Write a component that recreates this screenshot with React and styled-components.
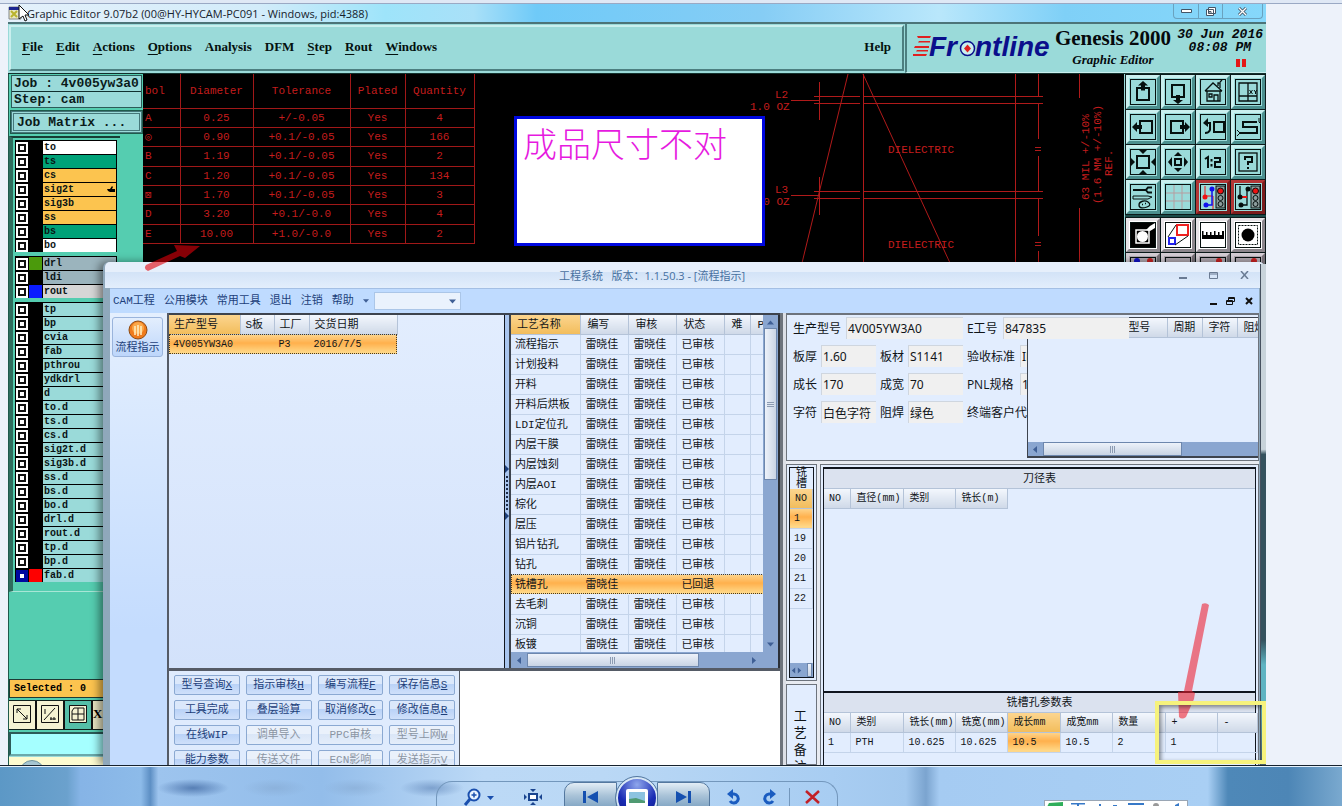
import React from "react";
import styled, { createGlobalStyle, css } from "styled-components";

const SONG = `"Liberation Mono", "Noto Sans CJK SC", monospace`;
const UI = `"Open Sans", "Noto Sans CJK SC", sans-serif`;
const MONO = `"Liberation Mono", monospace`;

const GlobalStyle = createGlobalStyle`
  * {
    box-sizing: border-box;
  }

  body {
    margin: 0;
    overflow: hidden;
  }

  button,
  input,
  select {
    font: inherit;
    color: inherit;
    margin: 0;
    padding: 0;
    border: none;
    background: none;
    border-radius: 0;
  }

  table {
    border-collapse: collapse;
    border-spacing: 0;
  }
`;

// === Viewer ===
const Viewer = styled.div`
  display: flex;
  flex-direction: column;
  height: 100vh;
  background: #edf2fa;
  border-top: 3px solid #dfe8f5;
`;

const Photo = styled.main`
  position: relative;
  flex: 1;
  min-height: 0;
  display: flex;
  flex-direction: column;
  margin: 0 76px 0 8px;
  overflow: hidden;
  background: #55cdb0;
`;

const TopLine = styled.div`
  height: 1px;
  background: #9aa9c4;
`;

// === CAM window ===
const CamTitle = styled.header`
  display: flex;
  align-items: center;
  height: 20px;
  flex: none;
  border-bottom: 2px solid #4c7478;
  background: linear-gradient(
    90deg,
    #e4f1fb 0,
    #d3ecfa 20%,
    #9ee4fa 30%,
    #a9e0f8 37%,
    #6fcaf8 42%,
    #86cdf5 60%,
    #b9e7fb 74%,
    #7fd0f7 84%,
    #86d8fb 100%
  );
  font: 11px ${UI};
  color: #16222c;

  > svg {
    overflow: visible;
  }
`;

const CamTitleText = styled.h1`
  flex: 1;
  margin: 0 0 0 3px;
  font: inherit;
`;

const CaptionButtons = styled.div`
  display: flex;
  align-self: flex-start;
  height: 15px;
  margin-right: 3px;
  border: 1px solid #6aa2bf;
  border-top: none;
  border-radius: 0 0 4px 4px;
`;

const CaptionButton = styled.button`
  display: flex;
  align-items: center;
  justify-content: center;
  width: ${({ $wide }) => ($wide ? "40px" : "24px")};

  & + & {
    border-left: 1px solid #6aa2bf;
  }
`;

const CamHeader = styled.div`
  display: flex;
  flex: none;
  height: 49px;
  background: #9adad9;
`;

const CamMenu = styled.nav`
  flex: 1;
  display: flex;
  align-items: center;
  gap: 13px;
  margin: 1px 1px 2px 1px;
  padding: 0 11px 2px 11px;
  border: 2px solid;
  border-color: #c9efee #4c7f80 #4c7f80 #c9efee;
  font: bold 13px "Liberation Serif", serif;
  color: #04110f;

  u {
    text-underline-offset: 3px;
  }
`;

const CamMenuItem = styled.button`
  &:last-child {
    margin-left: auto;
  }
`;

const Brand = styled.div`
  display: flex;
  width: 361px;
  padding: 1px 3px 0 6px;
  border-left: 2px solid #4c7f80;
  border-bottom: 1px solid #c9efee;
  color: #05090c;
`;

const BrandName = styled.div`
  width: 124px;
  text-align: center;
  font: bold 21px/26px "Liberation Serif", serif;
  white-space: nowrap;

  small {
    display: block;
    font: italic bold 13px/18px "Liberation Serif", serif;
  }
`;

const Clock = styled.div`
  flex: 1;
  text-align: right;
  font: italic bold 13px/13px ${MONO};
  padding-top: 3px;
  white-space: nowrap;

  span {
    display: block;
    margin-right: 12px;
  }
`;

const Pause = styled.i`
  display: block;
  width: 10px;
  height: 8px;
  margin: 5px 17px 0 auto;
  border: solid #e31717;
  border-width: 0 4px;
`;

const CamBody = styled.div`
  flex: 1;
  min-height: 0;
  display: flex;
  border-top: 1px solid #12302c;
`;

const CamSide = styled.aside`
  width: 135px;
  flex: none;
  display: flex;
  flex-direction: column;
  border-left: 1px solid #1f5a4c;
  background: #55cdb0;
`;

const JobBox = styled.div`
  margin: 1px 1px 3px 2px;
  border: 1px solid #2c5b58;
  background: #9adad9;
  font: bold 13px/15px ${MONO};
  color: #0a1a1a;
  white-space: nowrap;

  div {
    padding-left: 2px;
  }

  div + div {
    border-top: 1px solid #10302f;
  }
`;

const JobMatrixButton = styled.button`
  height: 22px;
  flex: none;
  margin: 0 1px 3px 2px;
  padding-left: 3px;
  border: 3px double #45777a;
  background: #9adad9;
  outline: 1px solid #1f5a4c;
  text-align: left;
  font: bold 13px/15px ${MONO};
  color: #0a1a1a;
`;

const LayerPanel = styled.div`
  width: 111px;
  padding: 2px 3px 9px 2px;
  border-left: 4px solid #2f6d5e;
  border-top: 2px solid #173d35;
  border-bottom: 1px solid #a8e6d6;
  background: #55cdb0;
`;

const LayerGroup = styled.div`
  background: #000;
  margin-bottom: 4px;
  padding: 0 1px;

  &:last-child {
    margin-bottom: 0;
  }
`;

const LayerRow = styled.label`
  display: flex;
  align-items: center;
  height: 14px;
  padding-top: 1px;
  font: bold 10px/13px ${MONO};
  color: #0b1414;
`;

const LayerCheck = styled.input`
  appearance: none;
  width: 12px;
  height: 12px;
  flex: none;
  border: 2px solid ${({ $active }) => ($active ? "#0008a0" : "#fff")};
  outline: 2px solid ${({ $active }) => ($active ? "#0008a0" : "#111")};
  outline-offset: -4px;
  background: #fff;
`;

const LayerColor = styled.span`
  width: 13px;
  height: 13px;
  margin: 0 1px;
  flex: none;
  background: ${({ $color }) => $color || "#000"};
`;

const LayerName = styled.span`
  flex: 1;
  height: 13px;
  padding: 0 1px;
  display: flex;
  justify-content: space-between;
  align-items: center;
  background: ${({ $bg }) => $bg};
`;

const CamFooter = styled.div`
  margin-top: auto;
  flex: none;
`;

const SelectedBar = styled.div`
  height: 19px;
  padding-left: 4px;
  border: 1px solid #1f3b35;
  background: #fcc44f;
  font: bold 10px/17px ${MONO};
`;

const ModeBar = styled.div`
  display: flex;
  margin-top: 2px;
  height: 30px;
  border: solid #10201c;
  border-width: 1px 0;
  background: #e9e6c4;
  font: bold 13px/26px "Liberation Serif", serif;
`;

const ModeButton = styled.button`
  width: 28px;
  height: 28px;
  padding: 3px;
  border-right: 2px solid #111;
  background: ${({ $on }) => ($on ? "#55bfa8" : "#f5f2d2")};
`;

const CommandInput = styled.input`
  display: block;
  width: 100%;
  height: 24px;
  margin-top: 2px;
  border: 2px solid;
  border-color: #2c5b58 #bdeeee #6aa9ab #2c5b58;
  background: #a5ffff;
`;

const FooterStrip = styled.div`
  height: 9px;
  overflow: hidden;
  background: #fdfbd0;
  border-top: 1px solid #9adad9;
  padding-left: 10px;

  i {
    display: block;
    width: 26px;
    height: 20px;
    margin-top: 3px;
    border: 1px solid #6f95a0;
    border-radius: 13px 13px 0 0;
    background: #a6c6d2;
  }
`;

const Canvas = styled.section`
  position: relative;
  flex: 1;
  min-width: 0;
  display: flex;
  justify-content: space-between;
  background: #000;
`;

const DrillTable = styled.table`
  width: 331px;
  height: 170px;
  table-layout: fixed;
  font: 11px/12px ${MONO};
  color: #c41d1d;

  th {
    height: 34px;
    padding-bottom: 4px;
    font-weight: normal;
  }

  th,
  td {
    padding: 0;
    text-align: center;
    border: 1px solid #a01818;
    border-top: none;
  }

  th:first-child,
  td:first-child {
    text-align: left;
    border-left: none;
    padding-left: 2px;
  }
`;

const StackUp = styled.svg`
  flex: none;
  width: 383px;
  height: 189px;
  font: 11px ${MONO};
  fill: #c41d1d;
`;

const Note = styled.div`
  position: absolute;
  left: 371px;
  top: 42px;
  width: 251px;
  height: 130px;
  padding: 2px 6px;
  border: 3px solid #0008e0;
  background: #fff;
  font: 300 34px/44px "Noto Sans CJK SC", sans-serif;
  color: #e61ae0;
  white-space: nowrap;
`;

const ToolBox = styled.aside`
  width: 142px;
  flex: none;
  background: #1c4a48;
  border-left: 1px solid #9adad9;
`;

const ToolGrid = styled.div`
  display: grid;
  grid-template-columns: repeat(4, 34px);
  gap: 1px;
  padding: 1px;
  margin-bottom: 2px;
  background: #0c1a1a;
`;

const TONES = {
  teal: ["#9adad9", "#c9efee", "#4c8f8e"],
  red: ["#9adad9", "#b33636", "#7c1c1c"],
  white: ["#fff", "#e8e4e8", "#8c868c"],
  grey: ["#b3abb3", "#d5ced5", "#777077"],
};

const ToolButton = styled.button`
  width: 34px;
  height: 34px;
  border: 3px solid;
  border-color: ${({ $tone }) => {
    const [, light, dark] = TONES[$tone];
    return `${light} ${dark} ${dark} ${light}`;
  }};
  background: ${({ $tone }) => TONES[$tone][0]};

  svg {
    display: block;
    width: 28px;
    height: 28px;
  }
`;

// === Engineering window ===
const AppWindow = styled.section`
  position: absolute;
  left: 95px;
  right: 1px;
  top: 258px;
  bottom: 0;
  display: flex;
  flex-direction: column;
  border: solid #8fa8bb;
  border-width: 0 6px 0 7px;
  border-radius: 6px 6px 0 0;
  background: #e2edfe;
  box-shadow: -4px 0 8px rgb(0 0 0 / 45%);
  font: 11px/12px ${SONG};
  color: #101418;
`;

const AppTitle = styled.header`
  display: flex;
  align-items: center;
  flex: none;
  height: 26px;
  margin: 0 -5px;
  padding: 0 4px 0 32px;
  border-radius: 5px 5px 0 0;
  background: linear-gradient(#e6effb 0 40%, #d3e3f7 40%, #e3eefc);
  color: #47709f;
`;

const AppTitleText = styled.h2`
  flex: 1;
  margin: 0;
  text-align: center;
  font: 11px ${UI};
  white-space: pre;
`;

const PlainButton = styled.button`
  display: flex;
  align-items: center;
  justify-content: center;
  width: ${({ $w }) => $w || 31}px;
  height: 16px;
`;

const AppMenu = styled.nav`
  display: flex;
  align-items: center;
  flex: none;
  gap: 9px;
  height: 25px;
  padding-left: 3px;
  border-top: 1px solid #a4bfe4;
  background: #bfdbff;
  color: #1d3f7a;
  white-space: nowrap;

  > div {
    display: flex;
    margin-left: auto;
  }
`;

const MenuCombo = styled.span`
  display: flex;
  align-items: center;
  margin-left: -4px;
  padding-right: 4px;
  border: 1px solid #abc6e8;
  background: #eaf2fd;

  select {
    appearance: none;
    width: 74px;
    height: 16px;
  }
`;

const Content = styled.div`
  flex: 1;
  min-height: 0;
  display: flex;
`;

const NavPane = styled.aside`
  flex: none;
  width: 57px;
  padding: 4px 3px 0 2px;
  background: linear-gradient(#e4effe, #c4dcfe 70%);
`;

const NavTile = styled.button`
  width: 51px;
  height: 40px;
  display: flex;
  flex-direction: column;
  align-items: center;
  gap: 2px;
  padding-top: 2px;
  border: 1px solid #9ab4dc;
  border-radius: 3px;
  background: linear-gradient(#e3eefd, #bdd6fb);
  color: #1d3f7a;

  svg {
    flex: none;
  }
`;

const LeftPane = styled.div`
  flex: 612 1 0;
  min-width: 0;
  display: flex;
  flex-direction: column;
  border-left: 2px solid #555b66;
`;

const ListRow = styled.div`
  flex: 1;
  min-height: 0;
  display: flex;
  border-top: 2px solid #3d434d;
  border-bottom: 3px solid #555b66;
`;

const OrderList = styled.div`
  flex: 1;
  min-width: 0;
  background: linear-gradient(#e2edfe, #d3e2fb);
`;

const Splitter = styled.div`
  width: 7px;
  flex: none;
  display: flex;
  align-items: center;
  border-left: 1px solid #10151e;
  border-right: 2px solid #3d434d;
  background: #a9c5ee;
`;

const ProcessPane = styled.div`
  width: 269px;
  flex: none;
  display: grid;
  grid-template-columns: minmax(0, 1fr) 15px;
  grid-template-rows: minmax(0, 1fr) 16px;
  border-right: 2px solid #2b3038;
  background: #e2edfe;
`;

const Clip = styled.div`
  overflow: hidden;
`;

const amber = css`
  background: linear-gradient(#fcd58f, #f2bd5c);
`;

const amberRow = css`
  background: linear-gradient(#fed58d, #ffb04c 45%, #ffdb8c);
`;

const Grid = styled.table`
  table-layout: fixed;
  width: ${({ $w }) => $w}px;
  white-space: nowrap;

  th {
    height: 19px;
    padding: 1px 0 0 ${({ $pad }) => $pad || 5}px;
    overflow: hidden;
    text-align: left;
    font-weight: normal;
    background: linear-gradient(#f3f7fd, #cfd9e8);
    border-right: 1px solid #b4c3d8;
    border-bottom: 1px solid #b4c3d8;
  }

  td {
    height: 20px;
    padding: 1px 0 0 4px;
    border-right: 1px solid #c4d4ea;
    border-bottom: 1px solid #c4d4ea;
  }

  th.hot {
    ${amber}
  }

  td.hot {
    ${amberRow}
  }

  tr.picked td {
    ${amberRow}
    border-color: transparent;
  }

  tr.picked {
    outline: 1px dotted #4b3a1c;
    outline-offset: -1px;
  }

  .num {
    font-size: 10px;
  }
`;

const ScrollV = styled.div`
  display: flex;
  flex-direction: column;
  align-items: center;
  justify-content: space-between;
  padding: 4px 0;
  background: #8aa6d0;
`;

const ScrollH = styled.div`
  display: flex;
  align-items: center;
  justify-content: space-between;
  height: ${({ $h }) => $h || 16}px;
  padding: 0 ${({ $pad }) => $pad || 5}px;
  background: #8aa6d0;
`;

const Thumb = styled.div`
  display: flex;
  align-items: center;
  justify-content: center;
  border: 1px solid #6d87ad;
  background: linear-gradient(
    ${({ $vertical }) => ($vertical ? "90deg" : "180deg")},
    #edf2fa,
    #c9d4e4
  );

  ${({ $vertical, $size }) =>
    $vertical
      ? `width: 13px; height: ${$size}px; margin: 2px 0 auto;`
      : `height: 14px; width: ${$size}px; margin: 0 auto 0 4px;`}
`;

const Grip = styled.i`
  ${({ $vertical }) =>
    $vertical
      ? `width: 7px; height: 5px; border: solid #8c9bb2; border-width: 1px 0; background: linear-gradient(#dde5f0 1px, #8c9bb2 1px 2px, #dde5f0 2px);`
      : `width: 5px; height: 7px; border: solid #8c9bb2; border-width: 0 1px; background: linear-gradient(90deg, #dde5f0 1px, #8c9bb2 1px 2px, #dde5f0 2px);`}
`;

const ActionRow = styled.div`
  flex: none;
  height: 94px;
  display: flex;
  overflow: hidden;
  background: #fff;
`;

const Actions = styled.div`
  width: 291px;
  flex: none;
  display: grid;
  grid-template-columns: repeat(4, 1fr);
  grid-auto-rows: 20px;
  gap: 5px 6px;
  padding: 4px 4px 4px 5px;
  border-right: 1px solid #555b66;
  background: #dfebfd;
`;

const ActionButton = styled.button`
  height: 20px;
  border: 1px solid #8ba9d2;
  border-radius: 2px;
  background: linear-gradient(#dbe8fb 0 45%, #b9d2f7 45%, #cfe0fa);
  color: #1d3f7a;
  white-space: nowrap;

  &:disabled {
    background: linear-gradient(#eaf1fb 0 45%, #dae6f7 45%, #e4edfa);
    color: #8b95a3;
  }
`;

const Gutter = styled.div`
  width: 6px;
  flex: none;
  border-left: 3px solid #6d737c;
  background: #dcdfe6;
`;

const RightPane = styled.div`
  flex: 474 1 0;
  min-width: 0;
  display: flex;
  flex-direction: column;
  gap: 3px;
  background: #e8ebf1;
`;

const InfoPanel = styled.form`
  position: relative;
  flex: none;
  height: 148px;
  padding: 2px 0 0 6px;
  display: flex;
  flex-direction: column;
  gap: 6px;
  border: 1px solid #6d737c;
  border-top-width: 2px;
  background: #e2edfe;
  overflow: hidden;
  font: 12px ${UI};
`;

const InfoLine = styled.div`
  display: flex;
  align-items: center;
  height: 22px;
  flex: none;
`;

const InfoLabel = styled.label`
  flex: none;
  width: ${({ $w }) => $w}px;
  margin-right: 4px;
  white-space: nowrap;
`;

const InfoInput = styled.input`
  flex: none;
  width: ${({ $w }) => $w}px;
  height: 22px;
  margin-right: 4px;
  padding-left: 1px;
  background: #f0f0f0;
  border: solid #cfd6df;
  border-width: 1px 0 0 1px;
  font-family: "Noto Sans", "Noto Sans CJK SC", sans-serif;

  ${({ $over }) => $over && "position: relative; z-index: 2;"}
`;

const SubList = styled.div`
  position: absolute;
  z-index: 1;
  left: 240px;
  right: 0;
  top: 2px;
  bottom: 2px;
  display: flex;
  flex-direction: column;
  justify-content: space-between;
  overflow: hidden;
  border: solid #3d434d;
  border-width: 1px 0 2px 1px;
  background: #e2edfe;
  font: 11px/12px ${SONG};
`;

const MillArea = styled.div`
  flex: 1;
  min-height: 0;
  display: flex;
  gap: 3px;
`;

const MillSide = styled.div`
  width: 31px;
  flex: none;
  display: flex;
  flex-direction: column;
  gap: 3px;
`;

const Box = styled.div`
  border: 1px solid #6d737c;
  padding: 2px;
  background: #e2edfe;
`;

const SlotList = styled.div`
  height: 211px;
  display: flex;
  flex-direction: column;
  border: 1px solid #10151e;

  > ${ScrollH} {
    margin-top: auto;
  }
`;

const SlotTitle = styled.div`
  height: 21px;
  text-align: center;
  font: 11px/11px ${SONG};
`;

const SideNote = styled(Box)`
  flex: 1;
  min-height: 0;
  overflow: hidden;
  padding: 23px 6px 0 4px;
  text-align: center;
  font: 13px/17px ${SONG};
`;

const MillMain = styled(Box)`
  flex: 1;
  min-width: 0;
  display: flex;
  flex-direction: column;
  overflow: hidden;
  padding-bottom: 0;
  border-bottom: none;
`;

const Sheet = styled.div`
  border: solid #10151e;
  border-width: 2px 1px 0 1px;
  background: #e2edfe;
  ${({ $grow }) => ($grow ? "flex: 1; min-height: 0;" : "flex: none; height: 74px;")}
`;

const SheetTitle = styled.div`
  height: 20px;
  text-align: center;
  line-height: 20px;
  border-bottom: 1px solid #b4c3d8;
  background: #dbe2ef;
`;

const EdgeGlass = styled.div`
  position: absolute;
  right: 0;
  top: 260px;
  bottom: 0;
  width: 6px;
  border-left: 1px solid #46515f;
  background: linear-gradient(#c8d3da 0 37%, #35525e 38% 75%, #5fb4c2 80% 88%, #47606c);
`;

// === Markup drawn on the photo ===
const SymbolArrow = styled.svg`
  position: absolute;
  left: 132px;
  top: 236px;
  width: 64px;
  height: 34px;
`;

const ValueMark = styled.div`
  position: absolute;
  right: 0;
  bottom: 1px;
  width: 111px;
  height: 63px;
  border: 4px solid #f6f27c;
  box-shadow: inset 2px 2px 4px rgb(0 0 0 / 45%);
`;

const ValueArrow = styled.svg`
  position: absolute;
  right: 52px;
  bottom: 43px;
  width: 40px;
  height: 122px;
`;

// === Viewer controls ===
const Dock = styled.footer`
  position: relative;
  flex: none;
  height: 41px;
  display: grid;
  grid-template-columns: 436fr 402px 504fr;
  align-items: end;
  overflow: hidden;
  border-top: 1px solid #16222e;
  box-shadow: inset 0 1px #e6f3fd;
  background: radial-gradient(ellipse 36px 9px at 193px 22px, rgb(50 90 150 / 65%), transparent),
    radial-gradient(ellipse 32px 9px at 275px 22px, rgb(130 165 205 / 50%), transparent),
    radial-gradient(ellipse 32px 9px at 355px 22px, rgb(130 165 205 / 50%), transparent),
    radial-gradient(ellipse 32px 9px at 432px 22px, rgb(50 90 150 / 40%), transparent),
    linear-gradient(
      90deg,
      #5c98c6 0,
      #6ba1cd 5%,
      #86b4e6 6%,
      #8dbbe9 10.5%,
      #5d8fc4 11.2%,
      #9dc4ee 11.8%,
      #93bdea 24%,
      #bcd9f6 36%,
      #bad8f5 45%,
      #a8cdf2 62%,
      #a2c8ee 67.5%,
      #7ba4cf 69%,
      #a5cbf2 70%,
      #a9cff4 90%,
      #4e88b8 91.5%,
      #4d86b6 96%,
      #7aa9cf 100%
    );
`;

const DockPill = styled.div`
  grid-column: 2;
  display: flex;
  align-items: center;
  height: 25px;
  padding-left: 19px;
  border: 1px solid #7397bc;
  border-bottom: none;
  border-radius: 16px 16px 0 0;
`;

const DockButton = styled.button`
  display: flex;
  align-items: center;
  justify-content: center;
  flex: none;
  width: ${({ $w }) => $w}px;
  height: 25px;
  padding-top: 6px;

  ${({ $chrome }) =>
    $chrome &&
    `
    border: 1px solid #54789f;
    border-radius: ${$chrome === "left" ? "10px 0 0 0" : "0 10px 0 0"};
    background: linear-gradient(#e2edf6, #a9c3d8 55%, #86a9c6);
  `}
`;

const PlayButton = styled.button`
  flex: none;
  display: flex;
  align-items: center;
  justify-content: center;
  width: 42px;
  height: 42px;
  margin: 8px -1px 0;
  border: 2px solid #d8e8f6;
  outline: 1px solid #54789f;
  border-radius: 50%;
  background: radial-gradient(circle at 50% 15%, #8fa7ec, #1a2cb4 55%, #0d1a86);
`;

const DockDivider = styled.i`
  width: 1px;
  height: 18px;
  margin: 6px 0 0 11px;
  background: #7397bc;
`;

const TrayBar = styled.div`
  position: absolute;
  left: 1044px;
  bottom: 0;
  width: 144px;
  height: 6px;
  overflow: hidden;
  border: 1px solid #9aa6b4;
  border-bottom: none;
  background: #fff;

  svg {
    display: block;
  }
`;

// === Icons ===
const Icon = ({ children, frame = true }) => (
  <svg viewBox="0 0 28 28" fill="none" stroke="#06100f" strokeWidth="2">
    {frame && <rect x="1.5" y="1.5" width="25" height="25" strokeWidth="1" />}
    {children}
  </svg>
);

const tools = {
  up: (
    <Icon>
      <rect x="8" y="10" width="12" height="12" />
      <path d="M14 3l5 4.500h-3v5h-4v-5H9z" fill="#06100f" stroke="none" />
    </Icon>
  ),
  down: (
    <Icon>
      <rect x="8" y="7" width="12" height="12" />
      <path d="M14 26l-5-4h3v-5h4v5h3z" fill="#06100f" stroke="none" />
    </Icon>
  ),
  home: (
    <Icon>
      <path d="M8 13v10h13V13M6 13l8-8 9 8M6 13h17M15 23v-6h4v6M10 16h3v3h-3z" strokeWidth="1.3" />
      <path d="M19 8V5h2v5M21 4l2-2" strokeWidth="1.3" />
    </Icon>
  ),
  split: (
    <Icon>
      <path d="M5 5h18v18H5zM14 5v18M5 18h18" strokeWidth="1.3" />
      <path d="M15.500 12l3 4M18.500 12l-3 4M20 12l1.500 2L23 12M21.500 14v2" strokeWidth="1" />
    </Icon>
  ),
  left: (
    <Icon>
      <rect x="11" y="8" width="12" height="12" />
      <path d="M3 14l5-5v3h5v4H8v3z" fill="#06100f" stroke="none" />
    </Icon>
  ),
  right: (
    <Icon>
      <rect x="7" y="8" width="12" height="12" />
      <path d="M26 14l-5-5v3h-5v4h5v3z" fill="#06100f" stroke="none" />
    </Icon>
  ),
  back: (
    <Icon>
      <rect x="15" y="9" width="10" height="10" />
      <path d="M8 10h3v7q-1 3-5 3" />
      <path d="M4 10l5-5v9z" fill="#06100f" stroke="none" />
    </Icon>
  ),
  snake: (
    <Icon>
      <path d="M23 9H9v5h14v6H5" />
      <path d="M25 5v4l2 2M3 17l3 3-3 3" strokeWidth="1" />
    </Icon>
  ),
  expand: (
    <Icon>
      <rect x="8" y="8" width="12" height="12" />
      <path d="M14 6l-4-4h8zM14 22l-4 4h8zM6 14l-4-4v8zM22 14l4-4v8z" fill="#06100f" stroke="none" />
    </Icon>
  ),
  shrink: (
    <Icon>
      <rect x="11" y="11" width="6" height="6" />
      <path d="M14 4l4 4h-8zM14 24l4-4h-8zM4 14l4-5v10zM24 14l-4-5v10z" fill="#06100f" stroke="none" />
    </Icon>
  ),
  ratio: (
    <Icon>
      <path d="M6 11l3-2v11M12.500 11v2.500M12.500 16v2.500M15 10h6v4h-5v5h6" />
    </Icon>
  ),
  help: (
    <Icon>
      <rect x="5" y="5" width="18" height="18" strokeWidth="1.3" />
      <path d="M11 12V9h7v5h-4v3M14 19v2" />
    </Icon>
  ),
  paint: (
    <Icon>
      <path d="M4 7h13" />
      <path d="M23 4.500h-4l-2 2.500 2 2.500h4" />
      <path d="M4 13h15l4 1-4 2H4z" strokeWidth="1" />
      <path d="M10 22c0-4 6-5 9-3s2 4-1 5-8 2-8-2zM13 21.500h1M16 20.500h1" strokeWidth="1.300" />
    </Icon>
  ),
  grid: (
    <Icon>
      <path d="M10 2v24M18 2v24M2 10h24M2 18h24" stroke="#b79c9f" strokeWidth="1" />
    </Icon>
  ),
  netRed: (
    <Icon>
      <path d="M6 3v10h8v13" stroke="#e11" strokeWidth="1" />
      <path d="M13 5v17H8" stroke="#11e" strokeWidth="1.500" />
      <circle cx="6" cy="14" r="1.500" fill="#e11" stroke="#e11" />
      <circle cx="13" cy="6" r="1.500" fill="#11e" stroke="#11e" />
      <circle cx="7" cy="22" r="1.500" fill="#11e" stroke="#11e" />
      <rect x="17" y="3" width="9" height="22" strokeWidth="1" fill="#8c9c9c" />
      <circle cx="21.500" cy="8" r="3" fill="#e11" strokeWidth="1" />
      <circle cx="21.500" cy="15" r="2.500" strokeWidth="1" />
      <circle cx="21.500" cy="21" r="2.500" strokeWidth="1" />
    </Icon>
  ),
  netBlack: (
    <Icon>
      <path d="M6 13V3M13 6v16H7" strokeWidth="1.300" />
      <path d="M7 14h6" stroke="#e11" />
      <circle cx="6" cy="14" r="1.500" fill="#000" />
      <circle cx="14" cy="6" r="1.500" fill="#000" />
      <circle cx="7" cy="22" r="1.500" fill="#000" />
      <rect x="17" y="3" width="9" height="22" strokeWidth="1" fill="#8c9c9c" />
      <circle cx="21.500" cy="8" r="3" fill="#e11" strokeWidth="1" />
      <circle cx="21.500" cy="15" r="2.500" strokeWidth="1" />
      <circle cx="21.500" cy="21" r="2.500" strokeWidth="1" />
    </Icon>
  ),
  mask: (
    <Icon>
      <path d="M2 2h24v24H2z" fill="#000" stroke="none" />
      <path d="M7 9h13v13H7z" stroke="#fff" strokeWidth="1.500" />
      <circle cx="13.500" cy="15.500" r="5.500" fill="#fff" stroke="none" />
      <path d="M17 9l4-4 5-3v5l-5 3z" fill="#fff" stroke="none" />
    </Icon>
  ),
  scale: (
    <Icon>
      <rect x="13" y="4" width="11" height="10" stroke="#e22" />
      <rect x="5" y="17" width="6" height="6" stroke="#22e" />
      <path d="M4 16L12 4M11 24l13-9" strokeWidth="1" />
    </Icon>
  ),
  ruler: (
    <Icon>
      <path
        d="M3 18V10h1.500v4H7v-3h1.500v3H11v-3h1.500v3H15v-4h1.500v4H19v-3h1.500v3H23v-4h2v8z"
        fill="#000"
        stroke="none"
      />
    </Icon>
  ),
  dot: (
    <Icon>
      <rect x="4.500" y="4.500" width="19" height="19" strokeDasharray="2 1" strokeWidth="1" />
      <circle cx="14" cy="14" r="6.500" fill="#000" stroke="none" />
    </Icon>
  ),
  pair: (
    <Icon>
      <circle cx="8" cy="5" r="3" fill="#11c" stroke="none" />
      <circle cx="21" cy="5" r="3" fill="#c22" stroke="none" />
    </Icon>
  ),
  blank: <Icon />,
  red: (
    <Icon>
      <circle cx="20" cy="5" r="3" fill="#c22" stroke="none" />
    </Icon>
  ),
};

const Caret = ({ d = "M0 0h7L3.500 4z", fill = "#3f5f95", w = 7, h = 7 }) => (
  <svg width={w} height={h} viewBox="0 0 7 7">
    <path d={d} fill={fill} />
  </svg>
);

const LEFT = "M5 0v7L1 3.500z";
const RIGHT = "M1 0v7l4-3.500z";
const UP = "M0 5.500h7L3.500 1.500z";
const DOWN = "M0 1.500h7L3.500 5.500z";

const Logo = () => (
  <svg width="138" height="44" viewBox="910 26 138 44" overflow="visible">
    <path
      d="M914 37h14l-1 2h-12zM916 42h11v1.500h-12zM912 47h14v2h-15zM914 51h11v1.500h-12zM910 55h14l-1 2h-13z"
      fill="#e02020"
    />
    <g fontFamily="Liberation Sans" fontSize="28" fontWeight="bold" fontStyle="italic" fill="#0a0f8c">
      <text x="926" y="57">Fr</text>
      <text x="972" y="57">ntline</text>
    </g>
    <circle cx="964.500" cy="49.500" r="7" fill="#c9efee" stroke="#0a0f8c" strokeWidth="1.500" />
    <path d="M964.500 45.500l3.500 4-3.500 4-3.500-4z" fill="#e02020" />
  </svg>
);

// === Data ===
const camMenu = [
  ["F", "ile"],
  ["E", "dit"],
  ["A", "ctions"],
  ["O", "ptions"],
  ["", "Analysis"],
  ["", "DFM"],
  ["S", "tep"],
  ["R", "out"],
  ["W", "indows"],
  ["", "Help"],
];

const WHITE = "#fff";
const GREEN = "#00a278";
const GOLD = "#fcc44f";
const TEAL = "#9adad9";

const layerGroups = [
  [
    ["to", WHITE],
    ["ts", GREEN],
    ["cs", GOLD],
    ["sig2t", GOLD],
    ["sig3b", GOLD],
    ["ss", GOLD],
    ["bs", GREEN],
    ["bo", WHITE],
  ],
  [
    ["drl", "#9bb4bd", "#4b9a0c"],
    ["ldi", "#9bb4bd"],
    ["rout", "#d6d6d6", "#0a1cff"],
  ],
  [
    ..."tp bp cvia fab pthrou ydkdrl d to.d ts.d cs.d sig2t.d sig3b.d ss.d bs.d bo.d drl.d rout.d tp.d bp.d"
      .split(" ")
      .map((name) => [name, TEAL]),
    ["fab.d", TEAL, "#fe0000"],
  ],
];

const drills = [
  ["A", "0.25", "+/-0.05", "Yes", "4"],
  ["◎", "0.90", "+0.1/-0.05", "Yes", "166"],
  ["B", "1.19", "+0.1/-0.05", "Yes", "2"],
  ["C", "1.20", "+0.1/-0.05", "Yes", "134"],
  ["⊠", "1.70", "+0.1/-0.05", "Yes", "3"],
  ["D", "3.20", "+0.1/-0.0", "Yes", "4"],
  ["E", "10.00", "+1.0/-0.0", "Yes", "2"],
];

const camTools = [
  "up", "down", "home", "split",
  "left", "right", "back", "snake",
  "expand", "shrink", "ratio", "help",
  "paint", "grid", "netRed", "netBlack",
];
const editTools = ["mask", "scale", "ruler", "dot", "pair", "blank", "red", "red"];

const steps = [
  "流程指示", "计划投料", "开料", "开料后烘板", "LDI定位孔", "内层干膜", "内层蚀刻", "内层AOI",
  "棕化", "层压", "铝片钻孔", "钻孔", "铣槽孔", "去毛刺", "沉铜", "板镀",
];

const actions = [
  ["型号查询", "X"],
  ["指示审核", "H"],
  ["编写流程", "F"],
  ["保存信息", "S"],
  ["工具完成"],
  ["叠层验算"],
  ["取消修改", "C"],
  ["修改信息", "R"],
  ["在线WIP"],
  ["调单导入", "", true],
  ["PPC审核", "", true],
  ["型号上网", "W", true],
  ["能力参数"],
  ["传送文件", "", true],
  ["ECN影响", "", true],
  ["发送指示", "V", true],
];

const info = [
  [
    ["生产型号", 49, 117, "4V005YW3A0"],
    ["E工号", 32, 126, "847835", true],
  ],
  [
    ["板厚", 24, 55, "1.60"],
    ["板材", 24, 55, "S1141"],
    ["验收标准", 49, 60, "IPC"],
  ],
  [
    ["成长", 24, 55, "170"],
    ["成宽", 24, 55, "70"],
    ["PNL规格", 49, 60, "1"],
  ],
  [
    ["字符", 24, 55, "白色字符"],
    ["阻焊", 24, 55, "绿色"],
    ["终端客户代码", 76, 30, ""],
  ],
];

function Cols({ widths }) {
  return (
    <colgroup>
      {widths.map((w, i) => (
        <col key={i} width={w} />
      ))}
    </colgroup>
  );
}

function Layers() {
  return (
    <LayerPanel>
      {layerGroups.map((group, g) => (
        <LayerGroup key={g}>
          {group.map(([name, bg, color]) => (
            <LayerRow key={name}>
              <LayerCheck type="checkbox" $active={name === "fab.d"} />
              <LayerColor $color={color} />
              <LayerName $bg={bg}>
                {name}
                {name === "sig2t" && (
                  <svg width="8" height="7" viewBox="0 0 8 7">
                    <path d="M0 3h3l2-3 1 1-1 2h3v3H3L1 5z" />
                  </svg>
                )}
              </LayerName>
            </LayerRow>
          ))}
        </LayerGroup>
      ))}
    </LayerPanel>
  );
}

function Side() {
  return (
    <CamSide>
      <JobBox>
        <div>Job : 4v005yw3a0</div>
        <div>Step: cam</div>
      </JobBox>
      <JobMatrixButton>Job Matrix ...</JobMatrixButton>
      <Layers />
      <CamFooter>
        <SelectedBar>Selected : 0</SelectedBar>
        <ModeBar>
          <ModeButton aria-label="Diagonal">
            <svg width="20" height="20" viewBox="0 0 20 20" fill="none" stroke="#111">
              <path d="M1.500 1.500h17v17h-17zM5 5l10 10M5 9V5h4M15 11v4h-4" />
            </svg>
          </ModeButton>
          <ModeButton aria-label="Units">
            <svg width="20" height="20" viewBox="0 0 20 20" fill="none" stroke="#111">
              <path d="M1.500 1.500h17v17h-17zM4 16L15 4M5 5v5M10 15h6M11 13v3M14 13v3" />
            </svg>
          </ModeButton>
          <ModeButton $on aria-label="Grid">
            <svg width="20" height="20" viewBox="0 0 20 20" fill="#f5f2d2" stroke="#111">
              <path d="M1.500 1.500h17v17h-17zM6 4h10v12H4V7zM10 4v12M4 10h12" />
            </svg>
          </ModeButton>
          X
        </ModeBar>
        <CommandInput aria-label="Command" />
        <FooterStrip>
          <i />
        </FooterStrip>
      </CamFooter>
    </CamSide>
  );
}

function Drawing() {
  return (
    <Canvas>
      <DrillTable>
        <Cols widths={[37, 73, 97, 55, 69]} />
        <thead>
          <tr>
            <th>bol</th>
            <th>Diameter</th>
            <th>Tolerance</th>
            <th>Plated</th>
            <th>Quantity</th>
          </tr>
        </thead>
        <tbody>
          {drills.map((row) => (
            <tr key={row[0]}>
              {row.map((cell, i) => (
                <td key={i}>{cell}</td>
              ))}
            </tr>
          ))}
        </tbody>
      </DrillTable>
      <StackUp viewBox="741 73 383 189">
        <g stroke="#b01a1a" fill="none">
          <path d="M848 73L802 262M863 73L950 262M863.500 73v189M1015.500 73v189" />
          <path d="M814 95.500h46M814 102.500h46M864 95.500h179M864 102.500h179M791 99.500h28" />
          <path d="M814 190.500h46M814 197.500h46M864 190.500h179M864 197.500h179M791 194.500h28" />
          <path d="M819.500 81v38M819.500 176v38M1038.500 73v23M1038.500 103v35M1038.500 155v36M1038.500 198v37M1038.500 250v12" />
          <path d="M1035 146.500h6M1035 149.500h6M1035 241.500h6M1035 244.500h6M1079.500 73v24M1079.500 207v55" />
        </g>
        <text x="775" y="97">L2</text>
        <text x="750" y="109">1.0 OZ</text>
        <text x="775" y="192">L3</text>
        <text x="750" y="204">1.0 OZ</text>
        <text x="888" y="152">DIELECTRIC</text>
        <text x="888" y="247">DIELECTRIC</text>
        <text transform="translate(1089 199) rotate(-90)">63 MIL +/-10%</text>
        <text transform="translate(1101 203) rotate(-90)">(1.6 MM +/-10%)</text>
        <text transform="translate(1112 175) rotate(-90)">REF.</text>
      </StackUp>
      <Note>成品尺寸不对</Note>
    </Canvas>
  );
}

function ProcessTable() {
  return (
    <ProcessPane>
      <Clip>
        <Grid $w={273} $pad={6}>
          <Cols widths={[70, 48, 48, 48, 26, 33]} />
          <thead>
            <tr>
              <th className="hot">工艺名称</th>
              <th>编写</th>
              <th>审核</th>
              <th>状态</th>
              <th>难</th>
              <th>PP</th>
            </tr>
          </thead>
          <tbody>
            {steps.map((step) => {
              const returned = step === "铣槽孔";
              return (
                <tr key={step} className={returned ? "picked" : undefined}>
                  <td>{step}</td>
                  <td>雷晓佳</td>
                  <td>{returned ? "" : "雷晓佳"}</td>
                  <td>{returned ? "已回退" : "已审核"}</td>
                  <td />
                  <td />
                </tr>
              );
            })}
          </tbody>
        </Grid>
      </Clip>
      <ScrollV>
        <Caret d={UP} />
        <Thumb $vertical $size={152}>
          <Grip $vertical />
        </Thumb>
        <Caret d={DOWN} />
      </ScrollV>
      <ScrollH>
        <Caret d={LEFT} />
        <Thumb $size={172}>
          <Grip />
        </Thumb>
        <Caret d={RIGHT} />
      </ScrollH>
      <ScrollH />
    </ProcessPane>
  );
}

function InfoForm() {
  return (
    <InfoPanel>
      {info.map((line, i) => (
        <InfoLine key={i}>
          {line.map(([label, lw, w, value, over]) => (
            <React.Fragment key={label}>
              <InfoLabel htmlFor={label} $w={lw}>
                {label}
              </InfoLabel>
              <InfoInput id={label} $w={w} $over={over} defaultValue={value} />
            </React.Fragment>
          ))}
        </InfoLine>
      ))}
      <SubList>
        <Grid $w={260}>
          <Cols widths={[95, 45, 35, 35, 50]} />
          <thead>
            <tr>
              <th />
              <th>型号</th>
              <th>周期</th>
              <th>字符</th>
              <th>阻焊</th>
            </tr>
          </thead>
        </Grid>
        <ScrollH $h={14} $pad={4}>
          <Caret d={LEFT} />
          <Thumb $size={139}>
            <Grip />
          </Thumb>
        </ScrollH>
      </SubList>
    </InfoPanel>
  );
}

function Milling() {
  return (
    <MillArea>
      <MillSide>
        <Box>
          <SlotList>
            <SlotTitle>
              铣
              <br />槽
            </SlotTitle>
            <Grid $w={23}>
              <thead>
                <tr>
                  <th className="hot num">NO</th>
                </tr>
              </thead>
              <tbody className="num">
                {[1, 19, 20, 21, 22].map((n) => (
                  <tr key={n}>
                    <td className={n === 1 ? "hot" : undefined}>{n}</td>
                  </tr>
                ))}
              </tbody>
            </Grid>
            <ScrollH $h={14} $pad={1}>
              <Caret d={LEFT} />
              <Caret d={RIGHT} />
              <Thumb $size={6} />
            </ScrollH>
          </SlotList>
        </Box>
        <SideNote>工艺备注</SideNote>
      </MillSide>
      <MillMain>
        <Sheet $grow>
          <SheetTitle>刀径表</SheetTitle>
          <Grid $w={184}>
            <Cols widths={[27, 53, 52, 52]} />
            <thead>
              <tr className="num">
                <th>NO</th>
                <th>直径(mm)</th>
                <th>类别</th>
                <th>铣长(m)</th>
              </tr>
            </thead>
          </Grid>
        </Sheet>
        <Sheet>
          <SheetTitle>铣槽孔参数表</SheetTitle>
          <Grid $w={434}>
            <Cols widths={[27, 53, 52, 52, 53, 52, 53, 52, 40]} />
            <thead>
              <tr className="num">
                <th>NO</th>
                <th>类别</th>
                <th>铣长(mm)</th>
                <th>铣宽(mm)</th>
                <th className="hot">成长mm</th>
                <th>成宽mm</th>
                <th>数量</th>
                <th>+</th>
                <th>-</th>
              </tr>
            </thead>
            <tbody className="num">
              <tr>
                <td>1</td>
                <td>PTH</td>
                <td>10.625</td>
                <td>10.625</td>
                <td className="hot">10.5</td>
                <td>10.5</td>
                <td>2</td>
                <td>1</td>
                <td />
              </tr>
            </tbody>
          </Grid>
        </Sheet>
      </MillMain>
    </MillArea>
  );
}

function EngineeringWindow() {
  return (
    <AppWindow>
      <AppTitle>
        <AppTitleText>工程系统   版本：1.1.50.3 - [流程指示]</AppTitleText>
        <PlainButton aria-label="Minimize">
          <svg width="8" height="8" stroke="#6a7b93" strokeWidth="2">
            <path d="M0 7h8" />
          </svg>
        </PlainButton>
        <PlainButton aria-label="Maximize">
          <svg width="9" height="7" fill="none" stroke="#6a7b93">
            <path d="M.5.5h8v6h-8zM0 2h9" />
          </svg>
        </PlainButton>
        <PlainButton aria-label="Close">
          <svg width="9" height="8" stroke="#6a7b93" strokeWidth="1.500">
            <path d="M1 0l7 8M8 0L1 8" />
          </svg>
        </PlainButton>
      </AppTitle>
      <AppMenu>
        <button>CAM工程</button>
        <button>公用模块</button>
        <button>常用工具</button>
        <button>退出</button>
        <button>注销</button>
        <button>帮助</button>
        <Caret w={6} h={6} d={DOWN} />
        <MenuCombo>
          <select aria-label="模块" />
          <Caret d={DOWN} />
        </MenuCombo>
        <div>
          <PlainButton $w={17} aria-label="最小化">
            <svg width="7" height="8" stroke="#111" strokeWidth="2">
              <path d="M0 7h7" />
            </svg>
          </PlainButton>
          <PlainButton $w={17} aria-label="还原">
            <svg width="9" height="8" fill="none" stroke="#111">
              <path d="M2.500 3V.5h6v4H6M.5 3.500h6v4h-6zM2 1.500h7M0 4.500h7" />
            </svg>
          </PlainButton>
          <PlainButton $w={20} aria-label="关闭">
            <svg width="8" height="8" stroke="#111" strokeWidth="2">
              <path d="M1 1l6 6M7 1L1 7" />
            </svg>
          </PlainButton>
        </div>
      </AppMenu>
      <Content>
        <NavPane>
          <NavTile>
            <svg width="20" height="20" viewBox="0 0 20 20">
              <circle cx="10" cy="10" r="9" fill="#ef7b1c" stroke="#8d4b13" />
              <circle cx="10" cy="8" r="6" fill="#fba84a" />
              <path d="M7 6v9M10 5v11M13 6v9" stroke="#fff0c2" strokeWidth="1.500" />
            </svg>
            流程指示
          </NavTile>
        </NavPane>
        <LeftPane>
          <ListRow>
            <OrderList>
              <Grid $w={228}>
                <Cols widths={[71, 34, 35, 88]} />
                <thead>
                  <tr>
                    <th className="hot">生产型号</th>
                    <th>S板</th>
                    <th>工厂</th>
                    <th>交货日期</th>
                  </tr>
                </thead>
                <tbody className="num">
                  <tr className="picked">
                    <td>4V005YW3A0</td>
                    <td />
                    <td>P3</td>
                    <td>2016/7/5</td>
                  </tr>
                </tbody>
              </Grid>
            </OrderList>
            <Splitter>
              <svg width="4" height="60" viewBox="0 0 4 60">
                <path d="M0 3l4 4-4 4zM0 50l4 4-4 4z" fill="#1d3f7a" />
                <path d="M2 14v34" stroke="#1d2c4a" strokeWidth="2" strokeDasharray="2 2" />
              </svg>
            </Splitter>
            <ProcessTable />
          </ListRow>
          <ActionRow>
            <Actions>
              {actions.map(([text, key, off]) => (
                <ActionButton key={text} disabled={off}>
                  {text}
                  {key && <u>{key}</u>}
                </ActionButton>
              ))}
            </Actions>
          </ActionRow>
        </LeftPane>
        <Gutter />
        <RightPane>
          <InfoForm />
          <Milling />
        </RightPane>
      </Content>
    </AppWindow>
  );
}

function Controls() {
  return (
    <Dock>
      <DockPill>
        <DockButton $w={46} aria-label="Zoom">
          <svg width="32" height="18" viewBox="0 0 32 18" fill="none" stroke="#1a4fae" strokeWidth="2.500">
            <circle cx="11" cy="7" r="5.500" fill="#e9f4ff" strokeWidth="2" />
            <path d="M7 11l-5 6" strokeWidth="3" />
            <path d="M11 4.500v5M8.500 7h5" strokeWidth="1.500" />
            <path d="M24 8h7l-3.500 4z" fill="#1a4fae" stroke="none" />
          </svg>
        </DockButton>
        <DockButton $w={62} aria-label="Fit">
          <svg width="18" height="16" viewBox="0 0 18 16" fill="#1a4590">
            <path d="M5 5h8v6H5z" fill="#fff" stroke="#1a4590" strokeWidth="2" />
            <path d="M9 3L6 0h6zM9 13l-3 3h6zM3 8L0 5v6zM15 8l3-3v6z" />
          </svg>
        </DockButton>
        <DockButton $w={53} $chrome="left" aria-label="Previous">
          <svg width="15" height="12" fill="#1550b0">
            <path d="M0 0h3v12H0zM15 0v12L4 6z" />
          </svg>
        </DockButton>
        <PlayButton aria-label="Slide show">
          <svg width="22" height="18" viewBox="0 0 22 18">
            <rect width="22" height="18" rx="2" fill="#fff" />
            <rect x="3" y="3" width="16" height="11" fill="#8cc3e0" />
            <path d="M3 14v-4l7-1 9 3v2z" fill="#4f9a72" />
          </svg>
        </PlayButton>
        <DockButton $w={53} $chrome="right" aria-label="Next">
          <svg width="15" height="12" fill="#1550b0">
            <path d="M12 0h3v12h-3zM0 0v12l11-6z" />
          </svg>
        </DockButton>
        <DockButton $w={48} aria-label="Rotate left">
          <svg width="15" height="16" viewBox="0 0 15 16" fill="none" stroke="#1a5cc0" strokeWidth="3">
            <path d="M5 5h2a4.500 4.500 0 1 1-4 7" />
            <path d="M0 5l6-5v10z" fill="#1a5cc0" stroke="none" />
          </svg>
        </DockButton>
        <DockButton $w={20} aria-label="Rotate right">
          <svg width="15" height="16" viewBox="0 0 15 16" fill="none" stroke="#1a5cc0" strokeWidth="3">
            <path d="M10 5H8a4.500 4.500 0 1 0 4 7" />
            <path d="M15 5L9 0v10z" fill="#1a5cc0" stroke="none" />
          </svg>
        </DockButton>
        <DockDivider />
        <DockButton $w={44} aria-label="Delete">
          <svg width="15" height="14" stroke="#c22026" strokeWidth="2.500">
            <path d="M1 1l13 12M14 1L1 13" />
          </svg>
        </DockButton>
      </DockPill>
      <TrayBar>
        <svg width="142" height="6" viewBox="0 0 142 6">
          <path d="M2 6l2-4 14-1v5z" fill="#2fae5a" />
          <path d="M26 2h14v1.500H34V6h-2V3.500h-6zM54 3h2v3h-2zM68 4h4v2h-4zM83 2h16v2H83zM130 4l4-2v4h-4z" fill="#3779c8" />
          <circle cx="111" cy="5" r="3" fill="#999" />
        </svg>
      </TrayBar>
    </Dock>
  );
}

export default function App() {
  return (
    <>
      <GlobalStyle />
      <Viewer>
        <TopLine />
        <Photo>
          <CamTitle>
            <svg width="16" height="20" viewBox="0 0 16 20">
              <path d="M1 4h12v12H1z" fill="#e8e6c0" stroke="#888" />
              <path d="M1 4h12v3H1z" fill="#1b2590" />
              <path d="M3 8l6 6M9 8l-6 6" stroke="#b9b32c" strokeWidth="2" />
              <path d="M11 2v14l4-3 2 5 2-1-2-5h4z" fill="#fff" stroke="#111" />
            </svg>
            <CamTitleText>Graphic Editor 9.07b2 (00@HY-HYCAM-PC091 - Windows, pid:4388)</CamTitleText>
            <CaptionButtons>
              <CaptionButton aria-label="Minimize">
                <svg width="11" height="5">
                  <path d="M.5.5h10v3H.5z" fill="#fff" stroke="#456" />
                </svg>
              </CaptionButton>
              <CaptionButton aria-label="Restore">
                <svg width="10" height="9" fill="none" stroke="#456">
                  <path d="M2.500.5h7v6h-7zM.5 2.500h7v6h-7zM3 4.500h2v2H3z" fill="#fff" />
                </svg>
              </CaptionButton>
              <CaptionButton $wide aria-label="Close">
                <svg width="11" height="9" stroke="#456" strokeWidth="3">
                  <path d="M2 1l7 7M9 1L2 8" />
                  <path d="M2 1l7 7M9 1L2 8" stroke="#fff" strokeWidth="1.300" />
                </svg>
              </CaptionButton>
            </CaptionButtons>
          </CamTitle>
          <CamHeader>
            <CamMenu>
              {camMenu.map(([key, rest]) => (
                <CamMenuItem key={rest}>
                  {key && <u>{key}</u>}
                  {rest}
                </CamMenuItem>
              ))}
            </CamMenu>
            <Brand>
              <Logo />
              <BrandName>
                Genesis 2000
                <small>Graphic Editor</small>
              </BrandName>
              <Clock>
                30 Jun 2016
                <span>08:08 PM</span>
                <Pause />
              </Clock>
            </Brand>
          </CamHeader>
          <CamBody>
            <Side />
            <Drawing />
            <ToolBox>
              <ToolGrid>
                {camTools.map((name) => (
                  <ToolButton key={name} aria-label={name} $tone={name.startsWith("net") ? "red" : "teal"}>
                    {tools[name]}
                  </ToolButton>
                ))}
              </ToolGrid>
              <ToolGrid>
                {editTools.map((name, i) => (
                  <ToolButton key={i} aria-label={name} $tone={i < 4 ? "white" : "grey"}>
                    {tools[name]}
                  </ToolButton>
                ))}
              </ToolGrid>
            </ToolBox>
          </CamBody>
          <EngineeringWindow />
          <EdgeGlass />
          <SymbolArrow viewBox="140 240 64 34">
            <path d="M146 265l31-14-3-6 26 1-15 12-5-2-32 15q-5-2-2-6z" fill="rgb(225 0 10 / 60%)" />
          </SymbolArrow>
          <ValueArrow viewBox="1174 600 40 122">
            <path
              d="M1202 604q4-2 7 1l-17 86 3 2-1 6-8 18q-4 3-7 0l-1-25 6-1z"
              fill="rgb(238 30 45 / 58%)"
            />
          </ValueArrow>
          <ValueMark />
        </Photo>
        <Controls />
      </Viewer>
    </>
  );
}
